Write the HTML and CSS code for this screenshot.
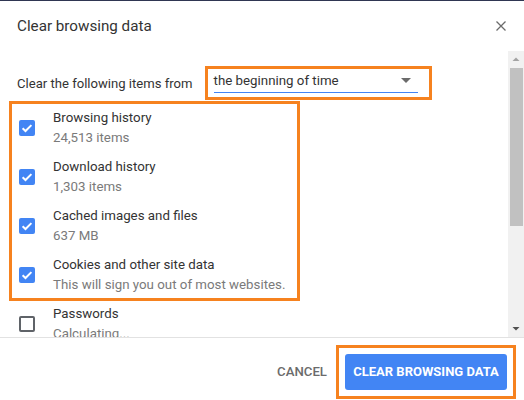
FILE: index.html
```html
<!DOCTYPE html>
<html lang="en">
<head>
    <meta charset="UTF-8">
    <title>Clear browsing data</title>
    <link rel="stylesheet" href="styles.css">
</head>
<body>
    <div class="dialog">
        <!-- Header -->
        <header class="dialog-head">
            <h1>Clear browsing data</h1>
            <button class="close" aria-label="Close">
                <svg width="10" height="10" viewBox="0 0 10 10"><path d="M0.5 0.5 L9.5 9.5 M9.5 0.5 L0.5 9.5" stroke="#6b6b6b" stroke-width="1.3" fill="none"/></svg>
            </button>
        </header>

        <!-- Scrollable body -->
        <div class="dialog-body">
            <div class="scroll-content">
                <div class="range-row">
                    <span class="range-label">Clear the following items from</span>
                    <div class="mark select-mark">
                        <div class="select">
                            <span>the beginning of time</span>
                            <svg class="arrow" width="10" height="5" viewBox="0 0 10 5"><path d="M0 0 H10 L5 5 Z" fill="#6b6b6b"/></svg>
                        </div>
                    </div>
                </div>

                <div class="mark items-mark">
                    <div class="item">
                        <span class="box checked"><svg width="16" height="16" viewBox="0 0 16 16"><path d="M3.6 8.3 L6.5 11 L12.4 5.1" stroke="#fff" stroke-width="2" fill="none"/></svg></span>
                        <div class="item-text"><div class="item-label">Browsing history</div><div class="item-sub">24,513 items</div></div>
                    </div>
                    <div class="item">
                        <span class="box checked"><svg width="16" height="16" viewBox="0 0 16 16"><path d="M3.6 8.3 L6.5 11 L12.4 5.1" stroke="#fff" stroke-width="2" fill="none"/></svg></span>
                        <div class="item-text"><div class="item-label">Download history</div><div class="item-sub">1,303 items</div></div>
                    </div>
                    <div class="item">
                        <span class="box checked"><svg width="16" height="16" viewBox="0 0 16 16"><path d="M3.6 8.3 L6.5 11 L12.4 5.1" stroke="#fff" stroke-width="2" fill="none"/></svg></span>
                        <div class="item-text"><div class="item-label">Cached images and files</div><div class="item-sub">637 MB</div></div>
                    </div>
                    <div class="item">
                        <span class="box checked"><svg width="16" height="16" viewBox="0 0 16 16"><path d="M3.6 8.3 L6.5 11 L12.4 5.1" stroke="#fff" stroke-width="2" fill="none"/></svg></span>
                        <div class="item-text"><div class="item-label">Cookies and other site data</div><div class="item-sub">This will sign you out of most websites.</div></div>
                    </div>
                </div>

                <div class="item item-plain">
                    <span class="box"></span>
                    <div class="item-text"><div class="item-label">Passwords</div><div class="item-sub">Calculating...</div></div>
                </div>
            </div>

            <!-- Scrollbar -->
            <div class="scrollbar">
                <svg class="sb-arrow" width="16" height="16" viewBox="0 0 16 16"><path d="M4.5 10 H11.5 L8 6.5 Z" fill="#a3a3a3"/></svg>
                <div class="sb-thumb"></div>
                <div class="sb-fill"></div>
                <svg class="sb-arrow" width="16" height="16" viewBox="0 0 16 16"><path d="M4.5 6 H11.5 L8 9.5 Z" fill="#505050"/></svg>
            </div>
        </div>

        <!-- Footer -->
        <footer class="dialog-foot">
            <button class="btn-cancel">CANCEL</button>
            <div class="mark btn-mark">
                <button class="btn-clear">CLEAR BROWSING DATA</button>
            </div>
        </footer>
    </div>
</body>
</html>
```

FILE: styles.css
```css
/* General Styling */
body {
    margin: 0;
    padding: 0;
    background-color: #fff;
    font-family: Roboto, "Liberation Sans", sans-serif;
    color: #333;
    overflow: hidden;
}

.dialog {
    width: 524px;
    height: 400px;
    box-sizing: border-box;
    border-top: 1px solid #2f3652; /* dark page edge */
    display: flex;
    flex-direction: column;
}

/* Orange annotation boxes */
.mark {
    border: 3px solid #f6821f;
    box-sizing: border-box;
}

/* Header */
.dialog-head {
    height: 49px;
    display: flex;
    align-items: center;
    justify-content: space-between;
    padding: 0 18px 1px 17px;
}

.dialog-head h1 {
    margin: 0;
    font-size: 15.2px;
    font-weight: 400;
    color: #333;
}

.close {
    border: none;
    background: none;
    padding: 0;
    display: flex;
}

/* Body */
.dialog-body {
    height: 286px;
    display: flex;
}

.scroll-content {
    flex: 1;
    overflow: hidden;
}

.range-row {
    display: flex;
    align-items: center;
    height: 34px;
    margin-top: 15px;
    padding-left: 17px;
    gap: 12px;
    font-size: 13.1px;
}

.select-mark {
    width: 227px;
    height: 34px;
    padding: 0 11px 0 6px;
}

.select {
    height: 23px;
    display: flex;
    align-items: center;
    justify-content: space-between;
    border-bottom: 1px solid #4285f4;
    font-size: 13.3px;
    color: #333;
    padding-right: 7px;
}

.items-mark {
    width: 291px;
    margin: 1px 0 0 9px;
}

.item {
    height: 49px;
    box-sizing: border-box;
    display: flex;
    align-items: center;
    gap: 18px;
    padding: 4px 0 5px 7px;
}

.items-mark .item:last-child {
    height: 47px;
    padding-bottom: 3px;
}

.item-plain {
    padding: 3px 0 6px 19px;
}

.item-label {
    font-size: 13.3px;
    line-height: 20px;
    color: #333;
}

.item-sub {
    font-size: 13.3px;
    line-height: 20px;
    color: #7a7a7a;
}

.box {
    width: 16px;
    height: 16px;
    flex: none;
    box-sizing: border-box;
    border: 2px solid #5f6368;
    border-radius: 2px;
}

.box.checked {
    border: none;
    background-color: #4285f4;
}

.box svg {
    display: block;
}

/* Scrollbar */
.scrollbar {
    width: 16px;
    background-color: #f1f1f1;
    display: flex;
    flex-direction: column;
}

.sb-arrow {
    display: block;
    flex: none;
}

.sb-thumb {
    height: 158px;
    margin: 1px 1px 0 2px;
    background-color: #c1c1c1;
}

.sb-fill {
    flex: 1;
}

/* Footer */
.dialog-foot {
    flex: 1;
    border-top: 1px solid #e2e2e2;
    display: flex;
    justify-content: flex-end;
    align-items: center;
    padding: 6px 8px 1px 0;
}

.btn-cancel {
    border: none;
    background: none;
    font-family: inherit;
    font-size: 13.2px;
    font-weight: 500;
    color: #6b6b6b;
    padding: 8px 9px;
}

.btn-mark {
    padding: 6px;
}

.btn-clear {
    display: block;
    width: 162px;
    height: 36px;
    border: none;
    border-radius: 3px;
    background-color: #4285f4;
    color: #fff;
    font-family: inherit;
    font-size: 13px;
    font-weight: 700;
    padding: 0;
}
```
